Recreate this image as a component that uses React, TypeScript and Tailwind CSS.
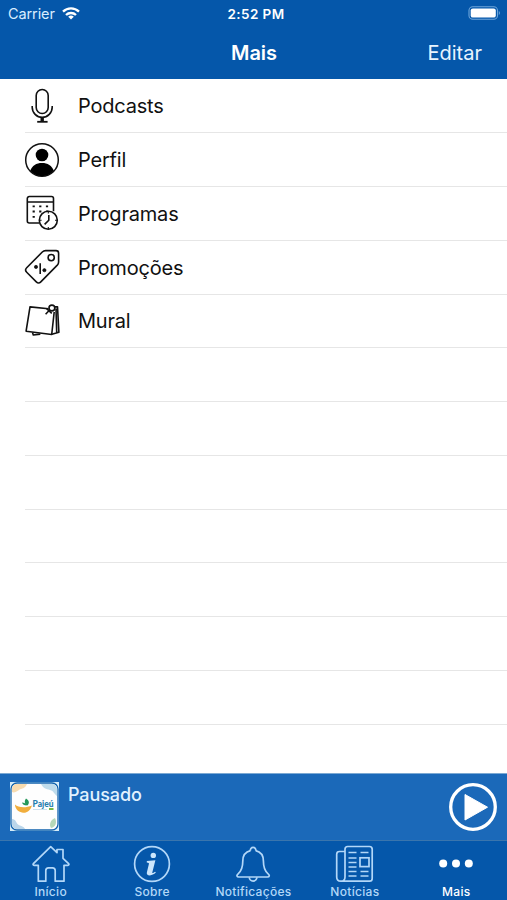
import React from "react";

const MicIcon = () => (
	<svg width="34" height="34" viewBox="0 0 34 34" fill="none" stroke="#111" strokeWidth="1.6" className="overflow-visible">
		<rect x="11.2" y="0.5" width="12" height="24" rx="6" />
		<path d="M7.2 17v1.2a10 10.2 0 0 0 20 0V17" />
		<path d="M17.2 28.4v4" strokeWidth="3.4" />
		<path d="M12.2 32.8h10.4" strokeWidth="1.8" />
	</svg>
);

const ProfileIcon = () => (
	<svg width="34" height="34" viewBox="0 0 34 34" className="overflow-visible">
		<circle cx="17" cy="17" r="16.3" fill="none" stroke="#111" strokeWidth="1.5" />
		<circle cx="17" cy="12" r="6.3" />
		<path d="M5.2 27.8C7 22.5 11.4 19.9 17 19.9s10 2.6 11.8 7.9A16.5 16.5 0 0 1 17 33.3 16.5 16.5 0 0 1 5.2 27.8Z" />
	</svg>
);

const CalendarIcon = () => (
	<svg width="34" height="34" viewBox="0 0 34 34" fill="none" stroke="#111" strokeWidth="1.6" className="overflow-visible">
		<path d="M14 27H4.300a2 2 0 0 1-2-2V2.500a2 2 0 0 1 2-2h22.200a2 2 0 0 1 2 2v12.800M2.300 6h26.200" />
		<path d="M7.6 10.300h2.2M14.2 10.300h2.2M20.9 10.300h2.2M7.6 15.500h2.2M14.2 15.500h2.2M20.9 15.500h2.2M7.6 20.800h2.2" strokeWidth="1.8" />
		<circle cx="23.3" cy="24.200" r="9" fill="#fff" />
		<path d="M23.8 18.9v5.300l-4.2 4.2" />
		<path d="M23.3 15.200v2.300M23.3 31v2.300M14.3 24.200h2.300M30 24.200h2.300" strokeWidth="1.100" />
	</svg>
);

const TagIcon = () => (
	<svg width="34" height="34" viewBox="0 0 34 34" fill="none" stroke="#111" strokeWidth="1.6" strokeLinejoin="round" className="overflow-visible">
		<path d="M20.600.6H31c1.600 0 2.600 1 2.600 2.600v8.700c0 1.300-.4 2.200-1.300 3.200L15.800 31.900c-1.500 1.500-3 1.500-4.500 0L1.700 22.300c-1.500-1.500-1.500-3 0-4.500L17.300 2c.9-.9 2-1.400 3.300-1.400Z" />
		<circle cx="26.2" cy="7.600" r="3.1" />
		<path d="M15.2 13.2v10.800" />
		<circle cx="11" cy="16.9" r="1.6" fill="#111" strokeWidth="0.7" />
		<circle cx="19.4" cy="20.2" r="1.6" fill="#111" strokeWidth="0.7" />
	</svg>
);

const NotesIcon = () => (
	<svg width="34" height="34" viewBox="0 0 34 34" fill="none" stroke="#111" strokeWidth="1.6" strokeLinejoin="round" className="overflow-visible">
		<path d="M23.500 4.800 5 2.900 1.100 27.200l25.600 3.300L29.200 8" />
		<path d="M29.600 2.900h2.900l1.400 25.400-7 2M31 4.500l.7 24" />
		<path d="M7.500 28.400l.8 2.600 7-.9" />
		<circle cx="26.9" cy="4" r="2.900" />
		<path d="M24.600 6l-4 4.200M21.600 4.600l5.200 4.800" />
	</svg>
);

const HomeIcon = () => (
	<svg width="36" height="36" viewBox="0 0 36 36" fill="none" stroke="#b3d7f8" strokeWidth="1.7" strokeLinejoin="round" className="overflow-visible">
		<path d="M17.7.7 24 6.700V3.500h6v8.800l5.6 5.3c.7.7.3 1.700-.7 1.700H31V35.200h-8.800V24.500c0-1.700-1-2.700-2.700-2.700h-4c-1.700 0-2.700 1-2.700 2.700v10.700H5.300V19.300H1.100c-1 0-1.400-1-.7-1.700L17.700.7Z" />
	</svg>
);

const InfoIcon = () => (
	<svg width="36" height="36" viewBox="0 0 36 36" fill="none" stroke="#b3d7f8" className="overflow-visible">
		<circle cx="18" cy="18" r="17.4" strokeWidth="1.7" />
		<circle cx="19.3" cy="9.4" r="2.700" fill="#cce6fc" stroke="none" />
		<path d="M12.800 15l8.600-.8-3.100 12.200c-.2 1 .6 1 2.800-.7l.8.9c-2 1.800-4 2.800-6 2.800-2.600 0-3.500-1.200-3-3.200l2-8.200c.2-1-.4-1.400-2.100-1.500Z" fill="#cce6fc" stroke="none" />
	</svg>
);

const BellIcon = () => (
	<svg width="36" height="36" viewBox="0 0 36 36" fill="none" stroke="#b3d7f8" strokeWidth="1.7" strokeLinejoin="round" className="overflow-visible">
		<path d="M15.500 4.600c-5 1.200-7.700 5.300-7.700 10.400 0 6.900-1.300 10-4.700 12.800-1.900 1.500-1.300 3.200.7 3.200h28.600c2 0 2.600-1.700.7-3.200-3.400-2.800-4.700-5.900-4.700-12.800 0-5.100-2.700-9.200-7.700-10.400" />
		<path d="M15.500 4.800a2.700 2.700 0 1 1 5.200 0M14.300 31.200a3.800 3.900 0 0 0 7.600 0" />
	</svg>
);

const NewsIcon = () => (
	<svg width="37" height="36" viewBox="0 0 37 36" fill="none" stroke="#b3d7f8" strokeWidth="1.7" className="overflow-visible">
		<path d="M9 31V3.2C9 1.500 10 .5 11.700.5h21.800c1.700 0 2.700 1 2.700 2.700v29.300c0 1.700-1 2.700-2.700 2.700H4.800C2.200 35.200.7 33.500.7 31V8.200c0-1.700 1-2.700 2.700-2.700H9M9 31c0 2.700-1.600 4.200-4 4.200" />
		<path d="M12.500 6.500h8M24.500 6.500h8M12.500 12h8M12.500 16.500h8M12.500 21h8M12.500 25.500h8M24.500 25.500h8M12.500 30h8M24.500 30h8" strokeWidth="1.5" />
		<rect x="24" y="11.8" width="9" height="8.8" />
	</svg>
);

const MoreIcon = () => (
	<svg width="36" height="36" viewBox="0 0 36 36" fill="#fff">
		<circle cx="5.2" cy="17.500" r="4" />
		<circle cx="18" cy="17.500" r="4" />
		<circle cx="30.8" cy="17.500" r="4" />
	</svg>
);

const Logo = () => (
	<svg width="49" height="49" viewBox="0 0 49 49">
		<rect width="49" height="49" fill="#d5ecf8" />
		<rect x="1" y="1" width="47" height="47" rx="6" fill="#fefefe" stroke="#1263ad" strokeWidth="1.300" />
		<path d="M2 7c0-3 2-5 5-5h10c-2 5-5 4-8 6s-5 3-7 2Z" fill="#f8dcb0" />
		<path d="M31 2h11c3 0 5 2 5 5v7c-3-2-3-5-7-6s-7-2-9-6Z" fill="#bfdcec" />
		<path d="M2 37c4 0 4 4 6 5.500s6 1.500 7 4.500H7c-3 0-5-2-5-5Z" fill="#bbd6ea" />
		<path d="M45 36c-5 2-6 7-4 10 5-1 6-6 4-10Z" fill="#b5d8b8" />
		<path d="M5 22.500c3 3 10 4 17 1-2 6-6 8-10 7-4-.7-7-4-7-8Z" fill="#f1ae3c" />
		<path d="M16 16.500c3 2 4 4 1.500 7-3-2-3.500-4-1.500-7ZM12 20.500c2 0 4 1 5 3-3 0-4.500-1-5-3Z" fill="#25985a" />
		<path d="M39 27h4.500" stroke="#72b944" strokeWidth="2" />
		<path d="M23 27.500h14" stroke="#b9d6e6" strokeWidth="0.700" />
		<text x="22.500" y="24.500" fontFamily="Lato, sans-serif" fontSize="8.500" fontWeight="900" fill="#287fae" textLength="21" lengthAdjust="spacingAndGlyphs">Pajeú</text>
	</svg>
);

const menu = [
	{ label: "Podcasts", icon: <MicIcon /> },
	{ label: "Perfil", icon: <ProfileIcon /> },
	{ label: "Programas", icon: <CalendarIcon /> },
	{ label: "Promoções", icon: <TagIcon /> },
	{ label: "Mural", icon: <NotesIcon /> },
];

const tabs = [
	{ label: "Início", icon: <HomeIcon /> },
	{ label: "Sobre", icon: <InfoIcon /> },
	{ label: "Notificações", icon: <BellIcon /> },
	{ label: "Notícias", icon: <NewsIcon /> },
	{ label: "Mais", icon: <MoreIcon />, active: true },
];

const emptyRows = [1, 2, 3, 4, 5, 6, 7];

function Header() {
	return (
		<header className="h-[79px] shrink-0 bg-[#0557aa] text-white">
			<div className="grid h-[28px] grid-cols-3 items-center pl-[8px] pr-[6px] text-[14px]">
				<div className="flex items-center gap-[7px] text-[#d9edff]">
					<span className="text-[14.5px] tracking-[-0.1px]">Carrier</span>
					<svg width="18" height="13" viewBox="0 0 18 13" fill="none" stroke="#fff" strokeWidth="2.3" className="-mt-[2px]">
						<path d="M1 4.7a11.500 11.500 0 0 1 16 0M4 8a7.2 7.2 0 0 1 10 0" />
						<path d="M9 12.500 6.200 9.800a4 4 0 0 1 5.600 0Z" fill="#fff" stroke="none" />
					</svg>
				</div>
				<span className="pl-[3px] text-center text-[13.5px] font-semibold tracking-[0.4px]">2:52 PM</span>
				<div className="-mt-[2px] flex justify-end">
					<svg width="33" height="14" viewBox="0 0 33 14">
						<rect x="1" y="0.7" width="28.5" height="12.6" rx="3.8" fill="none" stroke="#6da5da" strokeWidth="1.1" />
						<rect x="2.7" y="2.4" width="25.1" height="9.2" rx="2.2" fill="#fff" />
						<path d="M30.8 5v4c1.500-.6 1.500-3.400 0-4Z" fill="#6da5da" />
					</svg>
				</div>
			</div>
			<div className="grid h-[49px] grid-cols-3 items-center">
				<h1 className="col-start-2 pl-[1px] text-center text-[20px] font-semibold tracking-[-0.1px]">Mais</h1>
				<button className="justify-self-end pr-[25px] text-[20px] text-[#e8f4ff]">Editar</button>
			</div>
		</header>
	);
}

function App() {
	return (
		<div className="flex h-[900px] w-[507px] flex-col overflow-hidden bg-white font-['Inter',sans-serif]">
			<Header />
			<main className="flex-1 overflow-hidden pt-[0.5px]">
				{menu.map((item) => (
					<div key={item.label} className="ml-[25px] flex h-[53.75px] items-center gap-[19px] border-b border-[#e6e6e6]">
						{item.icon}
						<span className="pt-[1px] text-[20px] tracking-[-0.2px] text-[#111]">{item.label}</span>
					</div>
				))}
				{emptyRows.map((n) => (
					<div key={n} className="ml-[25px] h-[53.75px] border-b border-[#e6e6e6]" />
				))}
			</main>
			<section className="flex h-[67px] shrink-0 items-start justify-between border-t border-[#7ca9d3] bg-[#1b69b9] pl-[10px] pr-[9px] pt-[8px]">
				<div className="flex gap-[9px]">
					<Logo />
					<span className="pt-[2px] text-[18px] font-medium leading-[22px] tracking-[-0.1px] text-[#e2f2ff]">Pausado</span>
				</div>
				<svg width="50" height="50" viewBox="0 0 50 50">
					<circle cx="25" cy="25" r="22.3" fill="none" stroke="#fff" strokeWidth="3.3" />
					<path d="M17 12.500v25.500L39.500 25.200Z" fill="#fff" stroke="#fff" strokeWidth="1" strokeLinejoin="round" />
				</svg>
			</section>
			<nav className="grid h-[60px] shrink-0 grid-cols-5 border-t border-[#3a75ad] bg-[#0557aa]">
				{tabs.map((tab) => (
					<div key={tab.label} className="flex flex-col items-center pt-[5px]">
						{tab.icon}
						<span className={`mt-[3px] text-[12px] font-medium leading-[14px] tracking-[0.3px] ${tab.active ? "text-white" : "text-[#b3d7f8]"}`}>
							{tab.label}
						</span>
					</div>
				))}
			</nav>
		</div>
	);
}

export default App;
